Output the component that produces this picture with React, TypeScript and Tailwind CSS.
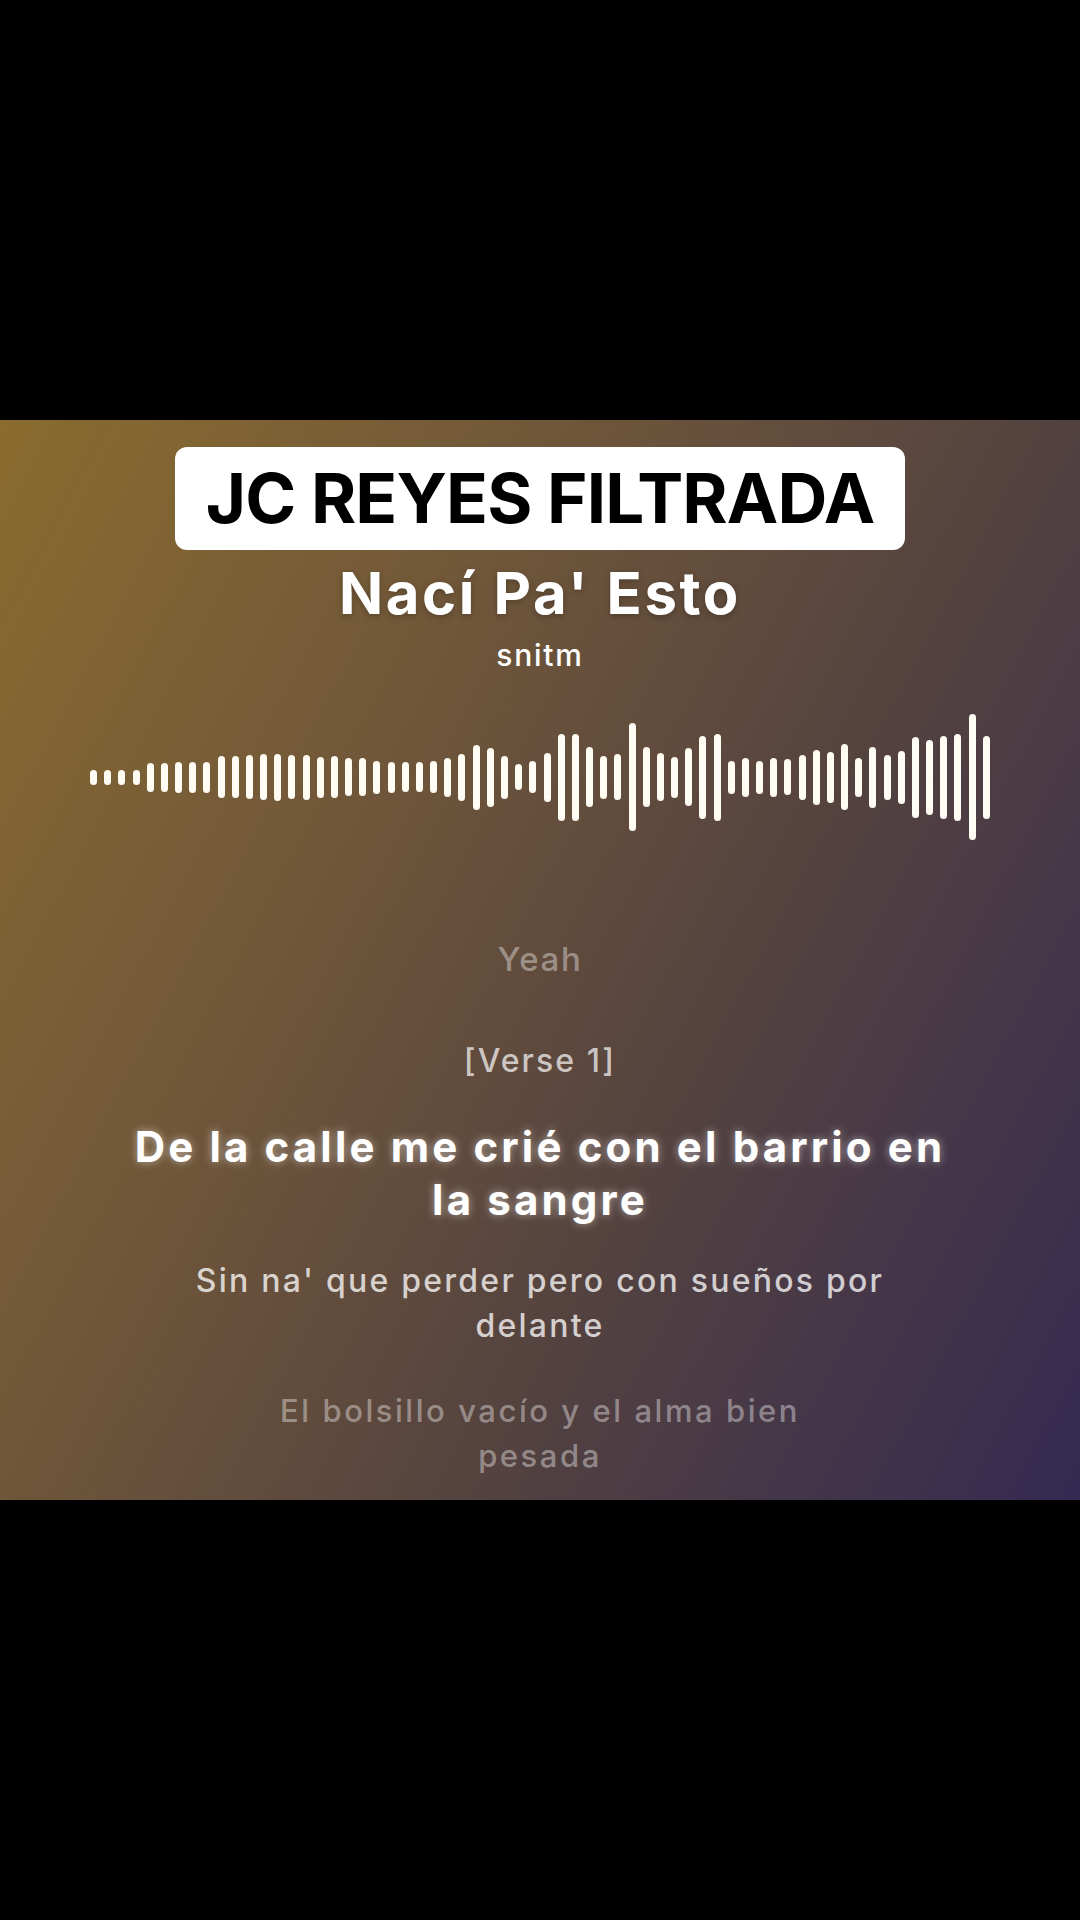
const BARS = [
  15, 15, 15, 15, 29, 29, 31, 31, 31, 42, 42, 44, 46, 47, 44, 45, 41, 42, 38, 38, 33, 31, 30, 30, 32, 39, 47, 65,
  59, 43, 26, 32, 49, 87, 87, 60, 43, 46, 108, 60, 48, 41, 58, 83, 87, 33, 39, 33, 39, 36, 45, 55, 51, 66, 39, 61,
  45, 53, 81, 75, 83, 87, 126, 83,
];

function Waveform() {
  return (
    <div className="mt-[39px] flex h-[130px] w-[900px] items-center justify-between self-center">
      {BARS.map((h, i) => (
        <span key={i} className="w-[7px] rounded-full bg-[#fffcf4]" style={{ height: h }} />
      ))}
    </div>
  );
}

function Lyrics() {
  return (
    <div className="flex flex-col items-center text-center">
      <p className="mt-[95px] text-[33px] leading-[44px] font-medium tracking-[0.05em] text-white/40">Yeah</p>
      <p className="mt-[58px] text-[32px] leading-[44px] font-medium tracking-[0.065em] text-white/70">[Verse 1]</p>
      <p className="mt-[37px] max-w-[850px] text-[42px] leading-[53px] font-bold tracking-[0.075em] text-white [text-shadow:0_0_9px_rgba(255,255,255,0.5)]">
        De la calle me crié con el barrio en la sangre
      </p>
      <p className="mt-[32px] max-w-[740px] text-[32px] leading-[45px] font-medium tracking-[0.07em] text-white/75">
        Sin na' que perder pero con sueños por delante
      </p>
      <p className="mt-[40px] max-w-[580px] text-[31px] leading-[45px] font-medium tracking-[0.082em] text-white/40">
        El bolsillo vacío y el alma bien pesada
      </p>
    </div>
  );
}

export default function App() {
  return (
    <div className="flex h-[1920px] w-[1080px] flex-col bg-black font-['Inter',sans-serif]">
      <div className="h-[420px] shrink-0" />
      <section className="flex h-[1080px] shrink-0 flex-col overflow-hidden bg-[linear-gradient(118deg,#8a6c2f_0%,#6f563a_35%,#55433f_62%,#342a52_100%)] pt-[27px]">
        <div className="flex h-[103px] w-[730px] items-center justify-center self-center rounded-[12px] bg-white">
          <span className="text-[69px] leading-none font-bold tracking-[-0.012em] text-black">
            JC REYES FILTRADA
          </span>
        </div>
        <h1 className="mt-[10px] text-center text-[58px] leading-[66px] font-bold tracking-[0.045em] text-white [text-shadow:0_2px_6px_rgba(0,0,0,0.25)]">
          Nací Pa' Esto
        </h1>
        <p className="mt-[11px] text-center text-[30px] leading-[36px] font-medium tracking-[0.06em] text-white">snitm</p>
        <Waveform />
        <Lyrics />
      </section>
      <div className="flex-1" />
    </div>
  );
}
